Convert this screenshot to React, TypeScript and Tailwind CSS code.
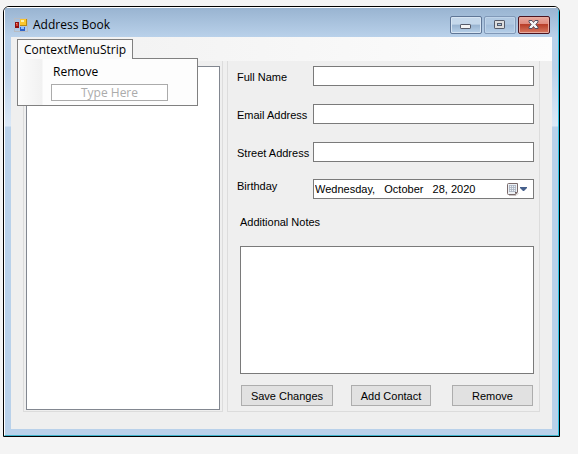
import React from "react";

const field =
  "block h-5 min-w-0 flex-1 border border-[#7a7a7a] bg-white px-1 outline-none";
const formLabel = "h-5 w-[76px] shrink-0 whitespace-nowrap leading-[22px]";
const pushButton =
  "h-[21px] border border-[#adadad] bg-[#e1e1e1] text-center leading-[20px] whitespace-nowrap";
const caption = "flex h-[18px] w-8 items-center justify-center rounded-[2px] border";

function AppIcon() {
  return (
    <svg width="14" height="14" viewBox="0 0 14 14" shapeRendering="crispEdges" aria-hidden="true">
      <path d="M.5 4V.5H13.5V13.5H.5V9.500" fill="none" stroke="#b8bcc2" />
      <rect x="6" y="1" width="7" height="7" fill="#b98a10" />
      <rect x="6" y="1" width="6" height="6" fill="#fbc62d" />
      <rect x="7" y="2" width="3" height="2" fill="#fff3a8" />
      <rect x="1" y="4" width="4" height="6" fill="#8e1210" />
      <rect x="2" y="5" width="2" height="3" fill="#d8402c" />
      <rect x="2" y="5" width="1" height="1" fill="#f09a88" />
      <rect x="6" y="9" width="5" height="4" fill="#2e63c8" />
      <rect x="7" y="9" width="3" height="2" fill="#8dbcff" />
    </svg>
  );
}

function MinimizeIcon() {
  return (
    <svg width="12" height="10" viewBox="0 0 12 10" aria-hidden="true">
      <rect x=".5" y="4.500" width="10" height="4" rx=".6" fill="#f4f4f4" stroke="#555a68" />
    </svg>
  );
}

function MaximizeIcon() {
  return (
    <svg width="12" height="10" viewBox="0 0 12 10" aria-hidden="true">
      <rect x=".5" y=".5" width="10" height="8" rx=".6" fill="#dedede" stroke="#555a68" />
      <rect x="3.500" y="3.500" width="4" height="2" fill="#a9c8e4" stroke="#555a68" />
    </svg>
  );
}

function CloseIcon() {
  return (
    <svg width="12" height="10" viewBox="0 0 12 10" aria-hidden="true">
      <path
        d="M1 .5H4L5.500 2.500L7 .5H10V2L7.800 4.500L10 7V8.500H7L5.500 6.500L4 8.500H1V7L3.200 4.500L1 2Z"
        fill="#f5f5f5"
        stroke="#565061"
      />
    </svg>
  );
}

function CalendarIcon() {
  return (
    <svg width="22" height="13" viewBox="0 0 22 13" aria-hidden="true">
      <path d="M2 12.500H9L11.500 10" fill="none" stroke="#c9c5c5" />
      <path d="M1.500 .5H10.500V9L8.500 11.500H1.500Q.5 11.500 .5 10.500V1.500Q.5 .5 1.500 .5Z" fill="#edf1f5" stroke="#7a6a6a" />
      <path d="M2 2.500H9M2 4.500H9M2 6.500H9M2 8.500H9M2.500 2V9M4.500 2V9M6.500 2V9M8.500 2V9" stroke="#a9b4c2" strokeWidth=".8" />
      <path d="M8 11V9H10.500Z" fill="#6d5d5d" />
      <path d="M13 4H20V5L17 8H16L13 5Z" fill="#46608c" />
    </svg>
  );
}

export default function App() {
  return (
    <div className="min-h-screen bg-[#f4f4f4] pt-[6px] pr-[18px] pb-[17px] pl-[3px] font-['Liberation_Sans',Arial,sans-serif] text-[11px] text-black">
      <main className="overflow-hidden rounded-t-[6px] border border-black bg-[#b9d1ea]">
        <div className="border border-t-white border-r-[#2fc4e4] border-b-[#3fb4cc] border-l-white bg-[linear-gradient(180deg,#99b4d1_0px,#b9d1ea_29px,#bad1ea_60px,#dce9f7_118px,#b9d1ea_119px)] px-[6px] pb-[6px]">
          <header className="-mx-[6px] flex h-[29px] items-center bg-linear-to-b from-[#99b4d1] to-[#b9d1ea] pt-[6px] pr-2 pb-[1px] pl-[9px] font-['Open_Sans','Noto_Sans',sans-serif]">
            <AppIcon />
            <h1 className="ml-[5px] flex-1 text-[12px] leading-5 font-normal">Address Book</h1>
            <div className="flex gap-[2px]">
              <button
                type="button"
                aria-label="Minimize"
                className={`${caption} border-[#5f7696] bg-[linear-gradient(#c5d8eb_0_45%,#98b3d0_50%,#b8d1e9)] shadow-[inset_0_0_0_1px_#d7e5f3]`}
              >
                <MinimizeIcon />
              </button>
              <button
                type="button"
                aria-label="Maximize"
                className={`${caption} border-[#8199b8] bg-[linear-gradient(#b1c9e2_0_45%,#a3bedb_50%,#b4cee8)] shadow-[inset_0_0_0_1px_#bfd4ea]`}
              >
                <MaximizeIcon />
              </button>
              <button
                type="button"
                aria-label="Close"
                className={`${caption} border-[#4c1420] bg-[linear-gradient(#e9a99f_0%,#df8a7e_43%,#b73d28_47%,#d87a62)] shadow-[inset_0_0_0_1px_#e8aca0]`}
              >
                <CloseIcon />
              </button>
            </div>
          </header>

          <div className="bg-[#efefef] pb-[17px]">
            <nav className="relative flex h-6 bg-linear-to-r from-[#f0f0f0] to-[#fdfdfd] pt-[2px] pl-[6px] font-['Open_Sans','Noto_Sans',sans-serif] text-[12px]">
              <button
                type="button"
                className="relative z-20 h-5 w-[116px] border border-b-0 border-[#808080] bg-[#fafafa] text-center leading-[18px] whitespace-nowrap"
              >
                ContextMenuStrip
              </button>
              <div className="absolute top-[21px] left-[6px] z-10 h-12 w-[181px] border border-[#808080] bg-[linear-gradient(90deg,#fcfcfc,#f1f1f1_24px,#fdfdfd_25px)] pl-[33px]">
                <button type="button" className="block h-[25px] pl-[2px] leading-6">
                  Remove
                </button>
                <input
                  aria-label="New menu item"
                  placeholder="Type Here"
                  className="block h-[17px] w-[117px] border border-[#ababab] bg-white text-center leading-[15px] outline-none placeholder:text-[#ababab]"
                />
              </div>
            </nav>

            <div className="flex gap-1 pr-3 pl-3">
              <section
                aria-label="Contacts"
                className="w-[200px] shrink-0 border border-t-0 border-[#dcdcdc] px-[2px] pt-[5px] pb-[1px]"
              >
                <div role="listbox" aria-label="Contacts" className="h-full border border-[#828790] bg-white" />
              </section>

              <form
                onSubmit={(e) => e.preventDefault()}
                className="min-w-0 flex-1 border border-t-0 border-[#dcdcdc] pt-[5px] pr-[5px] pb-[5px] pl-[9px]"
              >
                <div className="flex flex-col gap-[18px]">
                  <div className="flex">
                    <label htmlFor="name" className={formLabel}>Full Name</label>
                    <input id="name" className={field} />
                  </div>
                  <div className="flex">
                    <label htmlFor="email" className={formLabel}>Email Address</label>
                    <input id="email" className={field} />
                  </div>
                  <div className="flex">
                    <label htmlFor="street" className={formLabel}>Street Address</label>
                    <input id="street" className={field} />
                  </div>
                </div>
                <div className="mt-[17px] flex">
                  <label htmlFor="birthday" className="w-[76px] shrink-0 leading-[14px]">Birthday</label>
                  <div className="flex h-5 min-w-0 flex-1 items-center border border-[#7a7a7a] bg-white pr-1 pl-[1px]">
                    <input
                      id="birthday"
                      defaultValue={"Wednesday,\u00a0\u00a0 October\u00a0\u00a0 28, 2020"}
                      className="h-[18px] min-w-0 flex-1 bg-transparent outline-none"
                    />
                    <button type="button" aria-label="Open calendar">
                      <CalendarIcon />
                    </button>
                  </div>
                </div>
                <div className="mt-[13px] ml-[3px]">
                  <label htmlFor="notes" className="block leading-5">Additional Notes</label>
                  <textarea
                    id="notes"
                    className="mt-[14px] block h-32 w-full resize-none border border-[#7a7a7a] bg-white p-1 outline-none"
                  />
                  <div className="mt-[11px] flex gap-[18px] px-[1px]">
                    <button type="submit" className={`${pushButton} w-[92px]`}>Save Changes</button>
                    <button type="button" className={`${pushButton} w-20`}>Add Contact</button>
                    <button type="button" className={`${pushButton} ml-auto w-[81px]`}>Remove</button>
                  </div>
                </div>
              </form>
            </div>
          </div>
        </div>
      </main>
    </div>
  );
}
